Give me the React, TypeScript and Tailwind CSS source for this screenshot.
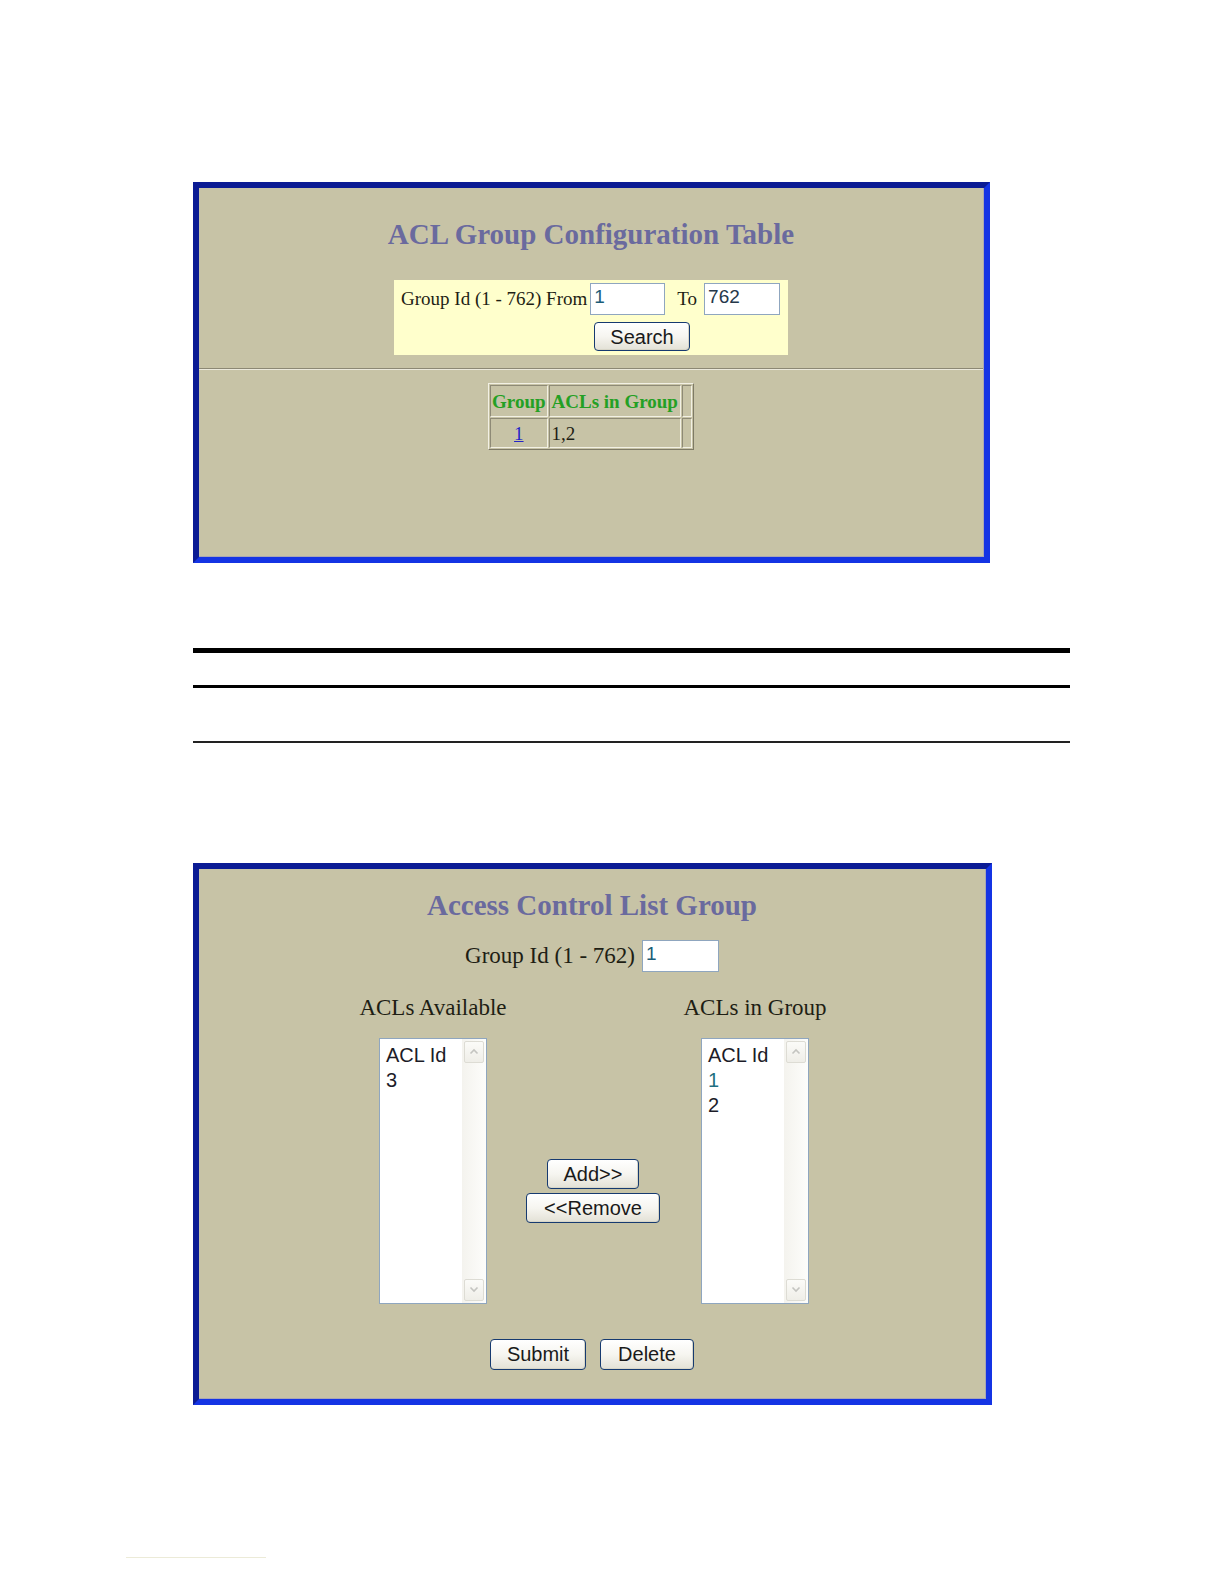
import React from "react";

const serif = { fontFamily: '"Liberation Serif", "Times New Roman", serif' };
const sans = { fontFamily: '"Liberation Sans", Arial, sans-serif' };

function XPButton({ label, w, h }: { label: string; w: number; h: number }) {
  return (
    <button
      type="button"
      style={{ ...sans, width: w, height: h }}
      className="flex items-center justify-center rounded-[4px] border border-[#163a70] bg-gradient-to-b from-[#ffffff] via-[#f6f5f0] to-[#e3e1d6] text-[20px] leading-none text-[#1a1a1a] shadow-[inset_-1px_-1px_0_#d8d6c8]"
    >
      {label}
    </button>
  );
}

function Chevron({ up }: { up: boolean }) {
  return (
    <div className="flex h-[22px] w-[20px] items-center justify-center rounded-[2px] border border-[#dddcd4] bg-gradient-to-b from-[#fbfbf8] to-[#efeee8]">
      <svg width="10" height="7" viewBox="0 0 10 7">
        <path
          d={up ? "M1.5 5.5 L5 2 L8.5 5.5" : "M1.5 1.5 L5 5 L8.5 1.5"}
          fill="none"
          stroke="#c4c4c0"
          strokeWidth="1.6"
        />
      </svg>
    </div>
  );
}

function ListBox({ items }: { items: { t: string; c?: string }[] }) {
  return (
    <div className="flex h-[266px] w-[108px] border border-[#8fa6bf] bg-white">
      <div style={sans} className="flex-1 pl-[6px] pt-[4px] text-[20px] leading-[25px] text-[#1c1c28]">
        {items.map((it, i) => (
          <div key={i} style={it.c ? { color: it.c } : undefined}>
            {it.t}
          </div>
        ))}
      </div>
      <div className="flex w-[24px] flex-col justify-between bg-gradient-to-r from-[#f4f3ee] to-[#fdfdfb] px-[2px] py-[2px]">
        <Chevron up />
        <Chevron up={false} />
      </div>
    </div>
  );
}

function Panel({ children, w, h }: { children: React.ReactNode; w: number; h: number }) {
  return (
    <div
      style={{ width: w, height: h }}
      className="border-[6px] border-t-[#0b1b94] border-l-[#0b1b94] border-b-[#1434e4] border-r-[#1434e4] bg-[#c7c3a6]"
    >
      <div className="h-full w-full border-b border-r border-[#a9a7b4]">{children}</div>
    </div>
  );
}

const cell =
  "border border-t-[#8e8a76] border-l-[#8e8a76] border-b-[#f2f0e4] border-r-[#f2f0e4] whitespace-nowrap leading-none";

export default function App() {
  return (
    <div className="relative h-[1584px] w-[1224px] overflow-hidden bg-white">
      <div className="pl-[193px] pt-[182px]">
        {/* Panel 1 */}
        <Panel w={797} h={381}>
          <div className="flex flex-col items-center">
            <div
              style={serif}
              className="pt-[29px] text-[29px] font-bold leading-[34px] text-[#6a6a9e]"
            >
              ACL Group Configuration Table
            </div>
            <div className="mt-[29px] h-[75px] w-[394px] bg-[#ffffcc] pt-[3px]">
              <div className="flex items-center">
                <span style={serif} className="pl-[7px] text-[19px] text-[#1e1e14]">
                  Group Id (1 - 762) From
                </span>
                <div
                  style={sans}
                  className="ml-[3px] h-[32px] w-[75px] border border-[#8fa6bf] bg-white pl-[3px] text-[19px] leading-[26px] text-[#1b5d78]"
                >
                  1
                </div>
                <span style={serif} className="ml-[12px] text-[19px] text-[#1e1e14]">
                  To
                </span>
                <div
                  style={sans}
                  className="ml-[7px] h-[32px] w-[76px] border border-[#8fa6bf] bg-white pl-[3px] text-[19px] leading-[26px] text-[#26384a]"
                >
                  762
                </div>
              </div>
              <div className="ml-[200px] mt-[7px]">
                <XPButton label="Search" w={96} h={29} />
              </div>
            </div>
          </div>
          <div className="mt-[13px] h-[2px] w-full border-t border-b border-t-[#8c8874] border-b-[#ebe9dc]" />
          <div className="mt-[13px] flex justify-center">
            <table
              style={serif}
              className="border-separate border-spacing-[1px] border border-t-[#f2f0e4] border-l-[#f2f0e4] border-b-[#7e7a66] border-r-[#7e7a66] text-[19px]"
            >
              <tbody>
                <tr className="h-[32px]">
                  <td className={`${cell} w-[56px] px-[1px] font-bold text-[#24a024]`}>Group</td>
                  <td className={`${cell} w-[131px] px-[2px] font-bold text-[#24a024]`}>ACLs in Group</td>
                  <td className={`${cell} w-[10px]`} />
                </tr>
                <tr className="h-[30px]">
                  <td className={`${cell} text-center`}>
                    <span className="text-[#2323c8] underline">1</span>
                  </td>
                  <td className={`${cell} px-[2px] text-[#1e1e14]`}>1,2</td>
                  <td className={cell} />
                </tr>
              </tbody>
            </table>
          </div>
        </Panel>

        {/* Rules */}
        <div className="mt-[85px] h-[5px] w-[877px] bg-black" />
        <div className="mt-[32px] h-[3px] w-[877px] bg-black" />
        <div className="mt-[53px] h-[2px] w-[877px] bg-[#222]" />

        {/* Panel 2 */}
        <div className="mt-[120px]">
          <Panel w={799} h={542}>
            <div className="flex flex-col items-center">
              <div
                style={serif}
                className="pt-[19px] text-[29px] font-bold leading-[34px] text-[#6a6a9e]"
              >
                Access Control List Group
              </div>
              <div className="mt-[17px] flex items-center">
                <span style={serif} className="text-[23px] text-[#1e1e14]">
                  Group Id (1 - 762)
                </span>
                <div
                  style={sans}
                  className="ml-[7px] h-[32px] w-[77px] border border-[#8fa6bf] bg-white pl-[3px] text-[19px] leading-[26px] text-[#1b5d78]"
                >
                  1
                </div>
              </div>
            </div>
            <div className="ml-[144px] mt-[21px] flex">
              <div className="flex w-[180px] flex-col items-center">
                <div style={serif} className="text-[23px] leading-[26px] text-[#1e1e14]">
                  ACLs Available
                </div>
                <div className="mt-[17px]">
                  <ListBox items={[{ t: "ACL Id" }, { t: "3" }]} />
                </div>
              </div>
              <div className="flex w-[140px] flex-col items-center pt-[164px]">
                <XPButton label="Add>>" w={92} h={30} />
                <div className="mt-[4px]">
                  <XPButton label="<<Remove" w={134} h={30} />
                </div>
              </div>
              <div className="flex w-[184px] flex-col items-center">
                <div style={serif} className="text-[23px] leading-[26px] text-[#1e1e14]">
                  ACLs in Group
                </div>
                <div className="mt-[17px]">
                  <ListBox items={[{ t: "ACL Id" }, { t: "1", c: "#1f6f80" }, { t: "2" }]} />
                </div>
              </div>
            </div>
            <div className="mt-[35px] flex justify-center gap-[14px]">
              <XPButton label="Submit" w={96} h={31} />
              <XPButton label="Delete" w={94} h={31} />
            </div>
          </Panel>
        </div>
      </div>
      <div className="ml-[126px] mt-[152px] h-[1px] w-[140px] bg-[#ecebd8]" />
    </div>
  );
}
